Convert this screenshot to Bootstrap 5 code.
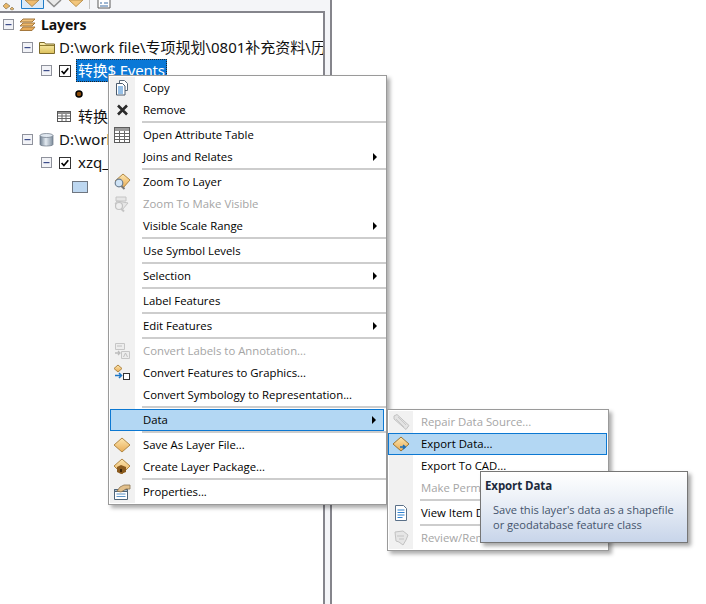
<!DOCTYPE html>
<html lang="en"><head><meta charset="utf-8"><title>Layers context menu</title>
<link href="https://cdn.jsdelivr.net/npm/bootstrap@5.3.0/dist/css/bootstrap.min.css" rel="stylesheet">
<style>
html,body{width:706px;height:604px;overflow:hidden;background:#fff;margin:0}
body{font-family:"Open Sans","Liberation Sans",sans-serif;color:#000}
.toc-shell{width:332px;height:604px;background:#f4f5f8;border-right:2px solid #85858c}
.toc-bar{height:11px;overflow:hidden;gap:0}
.toc-bar svg{display:block;flex:none}
.toc-pane{height:593px;width:325px;background:#fff;border-top:2px solid #85858c;border-right:2px solid #85858c;overflow:hidden}
.tree-row{height:23px;white-space:nowrap;font-size:15px;font-family:"Noto Sans","Noto Sans CJK SC",sans-serif;line-height:23px;color:#111}
.tree-row svg{flex:none;display:block}
.tw{width:11px;height:11px;flex:none}
.lay-name{font-weight:700;font-size:14px;margin-left:5px;letter-spacing:-.05px}
.sel-name{background:#0a78d7;color:#fff;outline:1px dotted #222;outline-offset:-1px;padding:0 2px;margin-left:5px;height:23px;line-height:22px;letter-spacing:-.2px}
.ctx-menu{position:absolute;background:#fff;border:1px solid #9a9a9a;box-shadow:3px 3px 4px rgba(0,0,0,.33);padding:1px;font-size:11.35px}
.ctx-main{left:108px;top:75px;width:279px;height:430px;z-index:2}
.ctx-sub{left:387px;top:409px;width:222px;height:142px;z-index:3}
.ctx-gutter{position:absolute;left:1px;top:1px;bottom:1px;width:25px;background:#f1f1f1}
.ctx-row{height:22px;position:relative;line-height:19px;padding-left:32px;white-space:nowrap;border:1px solid transparent}
.ctx-row>svg{position:absolute;left:2px;top:1px;display:block}
.ctx-row.on{background:#b3d7f3;border-color:#0c78d2;margin-right:1px}
.ctx-row.off{color:#a5a5a5}
.ctx-row.more::after{content:"";position:absolute;right:7px;top:6px;border-left:4px solid #000;border-top:4px solid transparent;border-bottom:4px solid transparent}
.ctx-rule{height:3px;margin-left:32px;margin-right:-1px;position:relative}
.ctx-rule::after{content:"";display:block;height:2px;background:#cdcdcd}
.ctx-sub .ctx-row{padding-left:31px}
.ctx-sub .ctx-row.on{padding-left:32px;margin:0 0 0 -1px}
.ctx-sub .ctx-rule{margin-left:31px}
.ctx-sub .ctx-gutter{width:24px}
.ctx-sub .ctx-row>svg{left:2px}
.ctx-sub .ctx-row.on>svg{left:3px}
.tip-box{position:absolute;left:480px;top:471px;width:208px;height:72px;z-index:4;border:1px solid #767676;background:linear-gradient(#fff 0,#eef2f8 35%,#c8d5ea 100%);box-shadow:3px 3px 4px rgba(0,0,0,.35);font-size:11.5px;padding:5px 4px}
.tip-head{font-weight:700;line-height:18px;color:#1c2a3c;letter-spacing:-.1px}
.tip-text{padding:7px 0 0 8px;line-height:15px;color:#44546c;font-size:11.1px}
.swatch-low{margin-top:2px}
</style></head>
<body>
<svg width="0" height="0" class="d-block">
<defs>
<linearGradient id="gold" x1="0" y1="0" x2="0" y2="1"><stop offset="0" stop-color="#fde7b0"/><stop offset="1" stop-color="#e8ab55"/></linearGradient>
<linearGradient id="fold" x1="0" y1="0" x2="0" y2="1"><stop offset="0" stop-color="#fdf3b8"/><stop offset="1" stop-color="#dcc05a"/></linearGradient>
<linearGradient id="cyl" x1="0" y1="0" x2="1" y2="0"><stop offset="0" stop-color="#6e7f90"/><stop offset=".45" stop-color="#e4ebf2"/><stop offset="1" stop-color="#7e8d9c"/></linearGradient>
</defs>
<symbol id="m-box" viewBox="0 0 11 11"><rect x=".5" y=".5" width="10" height="10" fill="#f2f3f7" stroke="#8f929c"/><rect x="2.5" y="5" width="6" height="1.2" fill="#3d4d8a"/></symbol>
<symbol id="chk" viewBox="0 0 12 12"><rect x=".5" y=".5" width="11" height="11" fill="#fff" stroke="#333"/><path d="M2.6 6l2.3 2.5 4.4-5.2" fill="none" stroke="#000" stroke-width="1.7"/></symbol>
<symbol id="grid" viewBox="0 0 14 11"><rect x=".5" y=".5" width="13" height="10" fill="#fff" stroke="#555"/><path d="M1 1h12v2H1z" fill="#8c8c8c"/><path d="M1 5h12M1 7.5h12M5 3v7M9 3v7" stroke="#666" fill="none"/></symbol>
</svg>
<div class="toc-shell">
  <div class="toc-bar d-flex">
    <svg width="332" height="11" viewBox="0 0 332 11">
      <path d="M6 3l4 3-4 3-3-3zM12 7l2 2-2 1-2-1z" fill="#eab768" stroke="#8a7a5a" stroke-width=".7"/>
      <path d="M21.500 0v8.500h22V0" fill="#dbeaf8" stroke="#1f7cc8"/>
      <path d="M25 0l7 6.500L39 0z" fill="#f0bc6e" stroke="#b08a4e"/>
      <path d="M47 0l7 6.500L61 0" fill="#e9e9e9" stroke="#8b8b8b" stroke-width="1.500"/>
      <path d="M69 0l7 6.500L83 0z" fill="#f3c67c" stroke="#bb924e"/>
      <path d="M89.500 0v9" stroke="#c4c4c4"/>
      <path d="M98 0v8h12V0" fill="#fff" stroke="#5b5b5b"/><path d="M100 3h2M104 3h4M100 6h8" stroke="#3f6fa5"/>
    </svg>
  </div>
  <div class="toc-pane">
    <div class="tree-row d-flex align-items-center" style="padding-left:3px"><svg class="tw"><use href="#m-box"/></svg>
      <svg width="17" height="16" viewBox="0 0 17 16" style="margin-left:5px"><path d="M4 2h12l-3 3H1z" fill="#f0c27c" stroke="#a5783d"/><path d="M4 6h12l-3 3H1z" fill="#eeb96c" stroke="#a5783d"/><path d="M4 10h12l-3 3.500H1z" fill="#e8ab58" stroke="#a5783d"/></svg>
      <span class="lay-name">Layers</span></div>
    <div class="tree-row d-flex align-items-center" style="padding-left:22px"><svg class="tw"><use href="#m-box"/></svg>
      <svg width="16" height="13" viewBox="0 0 16 13" style="margin-left:6px"><path d="M.5 1.500h5l1 1.500h9v9.500H.5z" fill="url(#fold)" stroke="#7d6a2a"/><path d="M1 4.500h14" stroke="#8d7a30"/></svg>
      <span style="margin-left:4px">D:\work file\专项规划\0801补充资料\历史数据</span></div>
    <div class="tree-row d-flex align-items-center" style="padding-left:41px"><svg class="tw"><use href="#m-box"/></svg>
      <svg width="12" height="12" style="margin-left:7px"><use href="#chk"/></svg>
      <span class="sel-name">转换$ Events</span></div>
    <div class="tree-row d-flex align-items-center" style="padding-left:75px"><svg width="8" height="8" viewBox="0 0 8 8"><circle cx="4" cy="4" r="3" fill="#8a4a08" stroke="#000" stroke-width="1.500"/></svg></div>
    <div class="tree-row d-flex align-items-center" style="padding-left:57px"><svg width="14" height="11"><use href="#grid"/></svg><span style="margin-left:7px">转换$</span></div>
    <div class="tree-row d-flex align-items-center" style="padding-left:22px"><svg class="tw"><use href="#m-box"/></svg>
      <svg width="15" height="14" viewBox="0 0 15 14" style="margin-left:6px"><path d="M1 2.500v9c0 2 13 2 13 0v-9z" fill="url(#cyl)" stroke="#6b7785" stroke-width=".7"/><ellipse cx="7.500" cy="2.500" rx="6.500" ry="2" fill="#dfe7ef" stroke="#6b7785" stroke-width=".7"/></svg>
      <span style="margin-left:5px">D:\work file</span></div>
    <div class="tree-row d-flex align-items-center" style="padding-left:41px"><svg class="tw"><use href="#m-box"/></svg>
      <svg width="12" height="12" style="margin-left:7px"><use href="#chk"/></svg>
      <span style="margin-left:7px">xzq_</span></div>
    <div class="tree-row d-flex align-items-center" style="padding-left:72px"><svg class="swatch-low" width="16" height="12" viewBox="0 0 16 12"><rect x=".5" y=".5" width="15" height="11" fill="#bdd7f0" stroke="#6f7680"/></svg></div>
  </div>
</div>

<div class="ctx-menu ctx-main">
  <div class="ctx-gutter"></div>
  <div class="ctx-row">Copy<svg width="18" height="18" viewBox="0 0 18 18"><path d="M6.500 1.500h5l3 3v7h-8z" fill="#fff" stroke="#5a6a7a"/><path d="M3.500 4.500h6l2.500 2.500v9H3.500z" fill="#fff" stroke="#4a5a6c"/><path d="M5 8h5M5 10h5M5 12h5M5 14h5" stroke="#2d80cf"/></svg></div>
  <div class="ctx-row">Remove<svg width="18" height="18" viewBox="0 0 18 18"><path d="M5 4.500l9 9M14 4.500l-9 9" stroke="#2a2a2a" stroke-width="2.600"/></svg></div>
  <div class="ctx-rule"></div>
  <div class="ctx-row">Open Attribute Table<svg width="18" height="18" viewBox="0 0 18 18"><rect x="1.500" y="1.500" width="15" height="15" fill="#fff" stroke="#5c5c5c"/><rect x="2" y="2" width="14" height="3" fill="#9a9a9a"/><path d="M2 7.500h14M2 10.500h14M2 13.500h14M6.500 5v11M11.500 5v11" stroke="#666"/></svg></div>
  <div class="ctx-row more">Joins and Relates</div>
  <div class="ctx-rule"></div>
  <div class="ctx-row">Zoom To Layer<svg width="18" height="18" viewBox="0 0 18 18"><path d="M10 1l7 6-7 8-8-7z" fill="url(#gold)" stroke="#b08744"/><circle cx="6" cy="10" r="3.800" fill="#cfe3f5" stroke="#6d7f92" stroke-width="1.200"/><path d="M8.500 13l3 3" stroke="#777" stroke-width="2"/></svg></div>
  <div class="ctx-row off">Zoom To Make Visible<svg width="18" height="18" viewBox="0 0 18 18"><path d="M3 2h10v4H3zM4 6l11 2-6 7-7-6z" fill="#e6e6e6" stroke="#c4c4c4"/><circle cx="6" cy="11" r="3.500" fill="#eee" stroke="#c2c2c2" stroke-width="1.200"/><path d="M8.500 14l2.500 2.500" stroke="#c4c4c4" stroke-width="2"/></svg></div>
  <div class="ctx-row more">Visible Scale Range</div>
  <div class="ctx-rule"></div>
  <div class="ctx-row">Use Symbol Levels</div>
  <div class="ctx-rule"></div>
  <div class="ctx-row more">Selection</div>
  <div class="ctx-rule"></div>
  <div class="ctx-row">Label Features</div>
  <div class="ctx-rule"></div>
  <div class="ctx-row more">Edit Features</div>
  <div class="ctx-rule"></div>
  <div class="ctx-row off">Convert Labels to Annotation...<svg width="18" height="18" viewBox="0 0 18 18"><path d="M2.500 1.500h9v6h-9zM8.500 9.500h8v7h-8z" fill="#ededed" stroke="#c6c6c6"/><path d="M2 11h5M5 9l2 2-2 2" fill="none" stroke="#bcbcbc" stroke-width="1.300"/><path d="M4 4h5M10.500 15l2-4 2 4" fill="none" stroke="#c0c0c0"/></svg></div>
  <div class="ctx-row">Convert Features to Graphics...<svg width="18" height="18" viewBox="0 0 18 18"><path d="M5 1l4 3.500L5 8 1 4.500z" fill="url(#gold)" stroke="#b08744"/><path d="M2 11.500h6M6 9l2.500 2.500L6 14" fill="none" stroke="#1c76c6" stroke-width="1.500"/><rect x="10.500" y="9.500" width="6" height="6" fill="#fff" stroke="#333"/></svg></div>
  <div class="ctx-row">Convert Symbology to Representation...</div>
  <div class="ctx-rule"></div>
  <div class="ctx-row on more">Data</div>
  <div class="ctx-rule"></div>
  <div class="ctx-row">Save As Layer File...<svg width="18" height="18" viewBox="0 0 18 18"><path d="M9 2l8 7-8 7-8-7z" fill="url(#gold)" stroke="#b08744"/></svg></div>
  <div class="ctx-row">Create Layer Package...<svg width="18" height="18" viewBox="0 0 18 18"><path d="M9 1l8 7-8 8-8-8z" fill="url(#gold)" stroke="#b08744"/><path d="M4 9l4-2 5 2v5l-5 2-4-2z" fill="#8a5a1e"/><path d="M7 11h2v3H7z" fill="#3c2508"/></svg></div>
  <div class="ctx-rule"></div>
  <div class="ctx-row">Properties...<svg width="18" height="18" viewBox="0 0 18 18"><path d="M1.500 6.500h13v10h-13z" fill="#fff" stroke="#4e6478"/><path d="M1.500 6.500h13v2h-13z" fill="#a8bccf" stroke="#4e6478"/><path d="M3.500 11h9M3.500 13.500h9" stroke="#5b93c7"/><path d="M4 8l3-4 4-2h6v4h-4L8 9z" fill="#e2c08c" stroke="#8c7350" stroke-width=".8"/></svg></div>
</div>

<div class="ctx-menu ctx-sub">
  <div class="ctx-gutter"></div>
  <div class="ctx-row off">Repair Data Source...<svg width="18" height="18" viewBox="0 0 18 18"><path d="M2 3l3-1.500 12 11-3 4L2 6z" fill="#e3e3e3" stroke="#c2c2c2"/><path d="M6 4l8 8M4 6l8 8" stroke="#c8c8c8"/></svg></div>
  <div class="ctx-row on">Export Data...<svg width="18" height="18" viewBox="0 0 18 18"><path d="M9 2l8 7-8 7-8-7z" fill="url(#gold)" stroke="#9c7533"/><path d="M8 12h5M11 10l2.200 2L11 14" fill="none" stroke="#1c6fb8" stroke-width="1.500"/></svg></div>
  <div class="ctx-row">Export To CAD...</div>
  <div class="ctx-row off">Make Permanent</div>
  <div class="ctx-rule"></div>
  <div class="ctx-row">View Item Description...<svg width="18" height="18" viewBox="0 0 18 18"><path d="M3.500 1.500h8l3 3v12h-11z" fill="#fff" stroke="#5a7088"/><path d="M5.500 6h7M5.500 8.500h7M5.500 11h7M5.500 13.500h5" stroke="#2d80cf"/></svg></div>
  <div class="ctx-rule"></div>
  <div class="ctx-row off">Review/Rematch Addresses...<svg width="18" height="18" viewBox="0 0 18 18"><path d="M3 3l8-1 5 4-2 5-3 5-4-3-3-1z" fill="#e6e6e6" stroke="#c2c2c2"/><path d="M5 7h7M7 10h5" stroke="#c4c4c4"/></svg></div>
</div>

<div class="tip-box">
  <div class="tip-head">Export Data</div>
  <div class="tip-text">Save this layer's data as a shapefile<br>or geodatabase feature class</div>
</div>
</body></html>
